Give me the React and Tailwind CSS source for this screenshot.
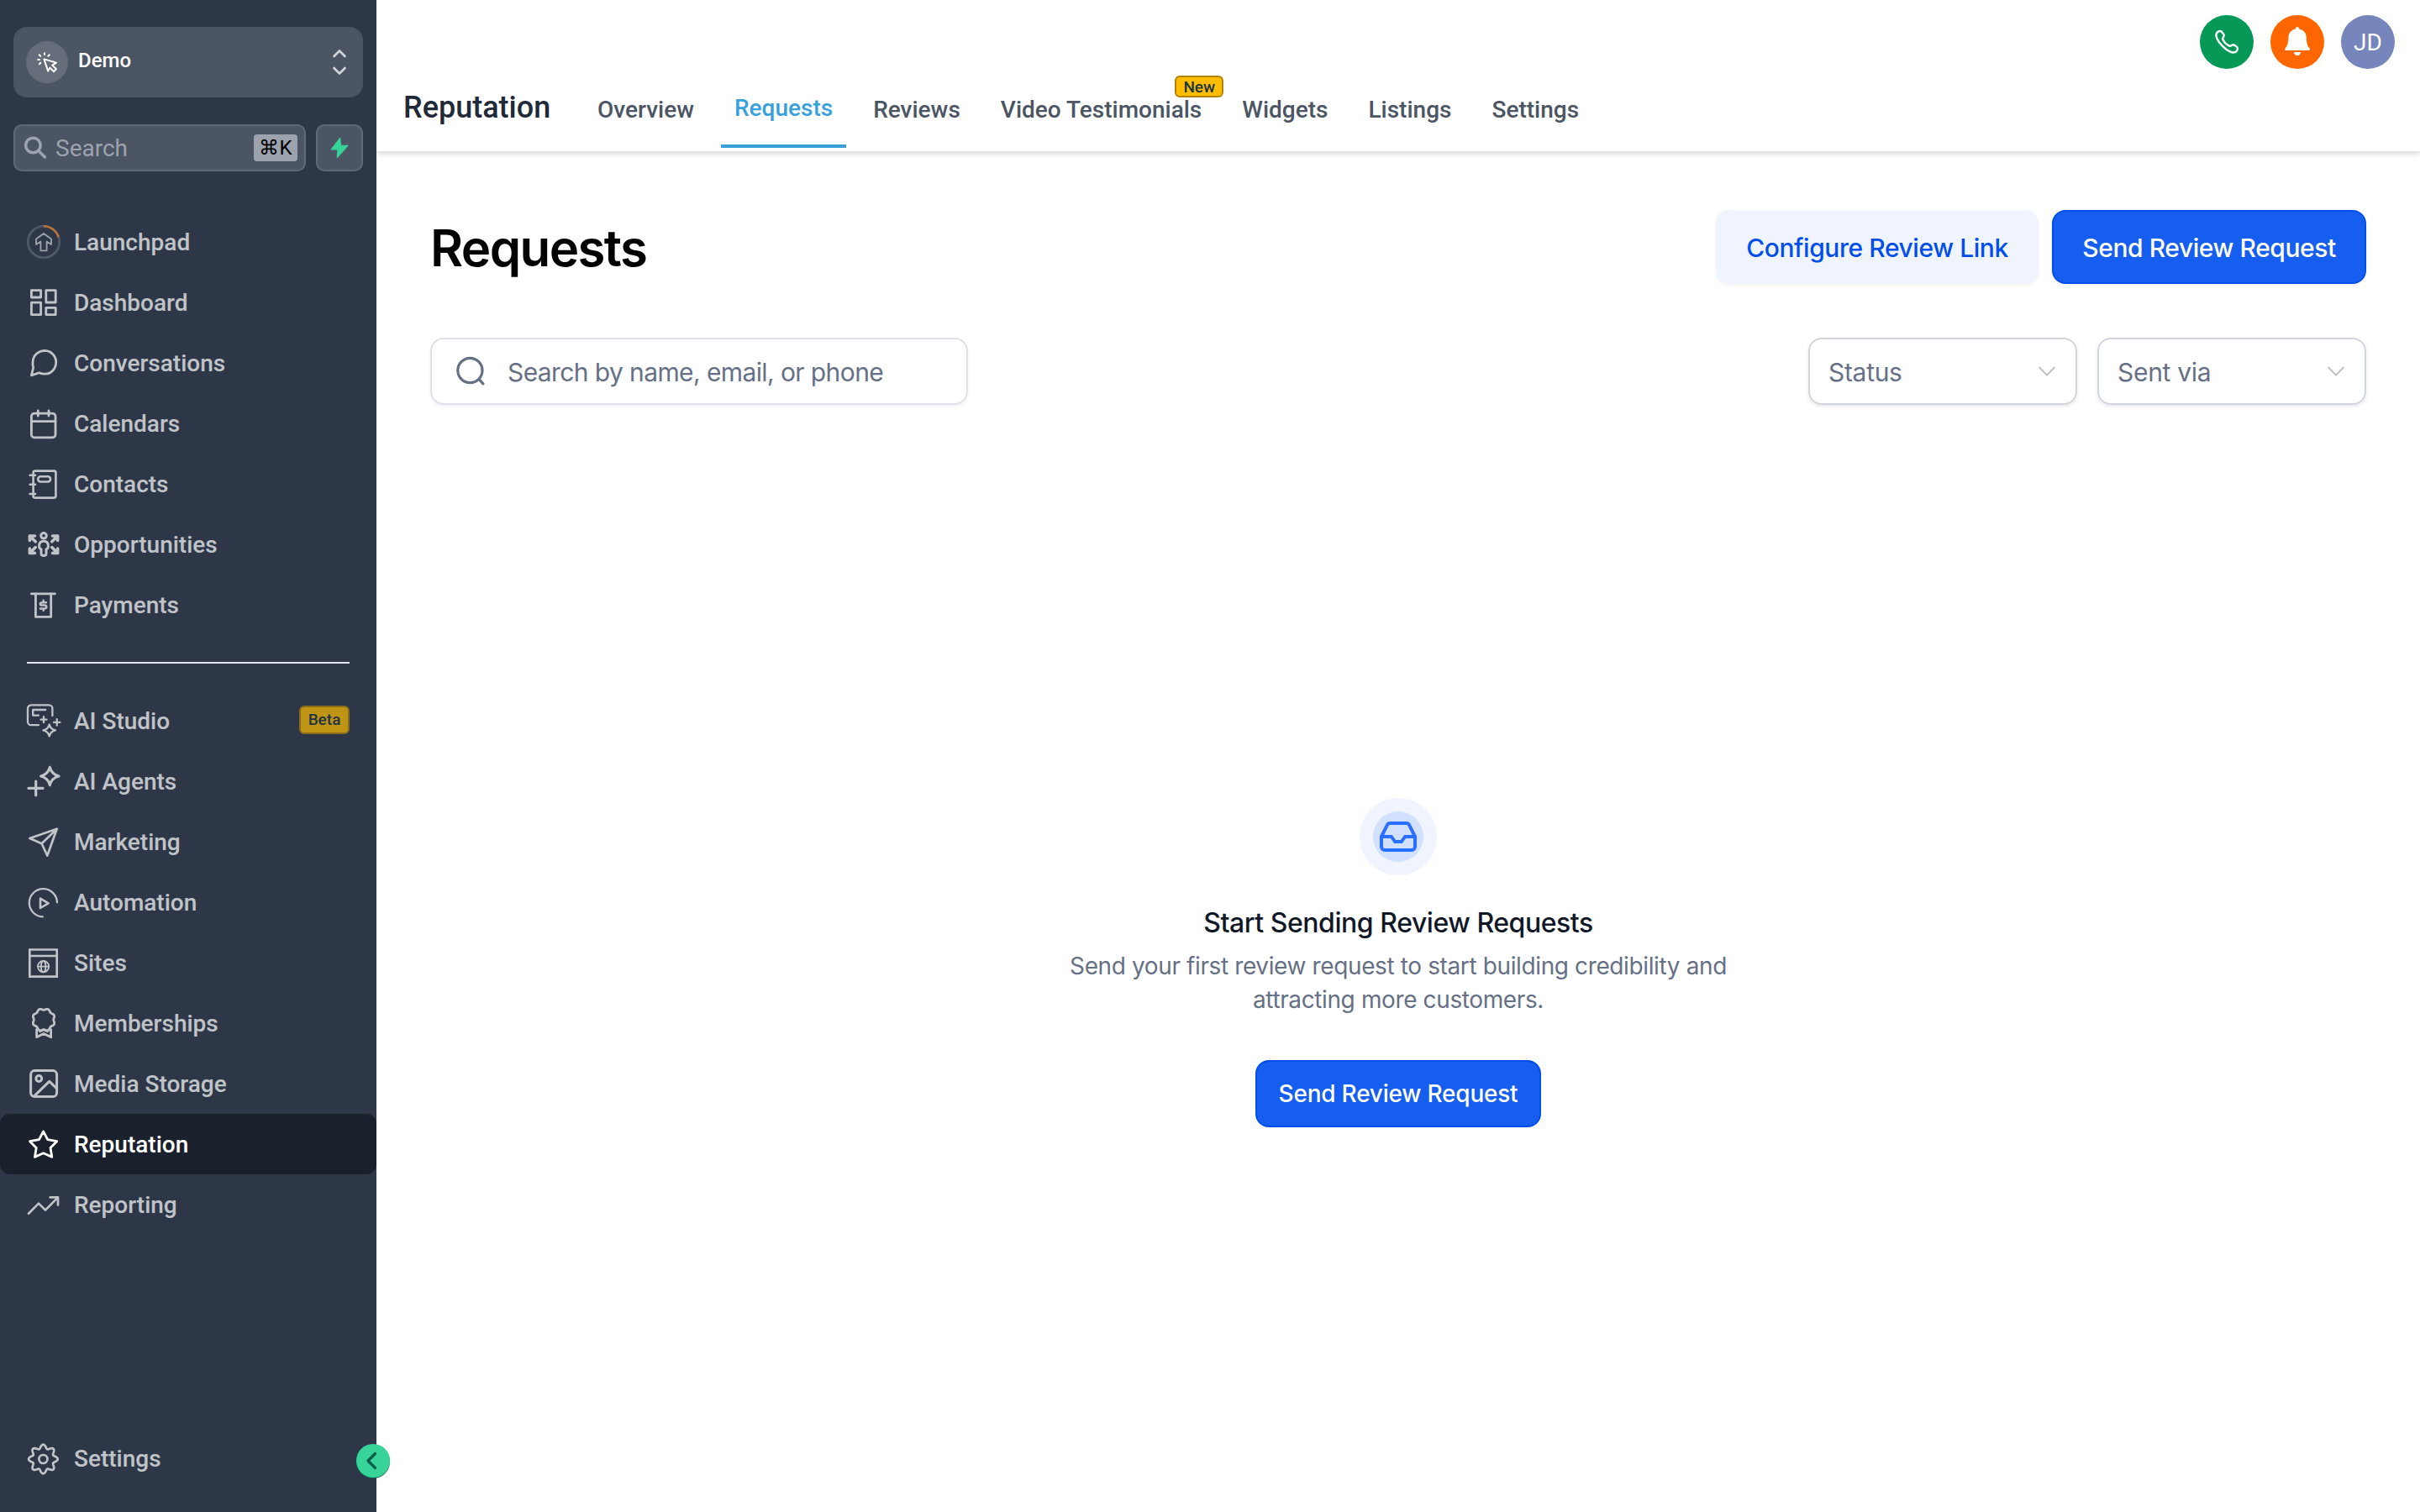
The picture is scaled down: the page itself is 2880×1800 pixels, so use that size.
import { Inbox } from "lucide-react"

// closed wavy outline, used by the badge and the gear
const wavyPath = (cx, cy, r, amp, lobes, phase) => {
    const pts = []
    for (let i = 0; i < 160; i++) {
        const a = (i / 160) * Math.PI * 2
        const rad = r + amp * Math.cos(lobes * a + phase)
        pts.push(`${(cx + rad * Math.sin(a)).toFixed(2)} ${(cy - rad * Math.cos(a)).toFixed(2)}`)
    }
    return `M${pts.join("L")}Z`
}

const Icon = ({ children, width = 2.8 }) => (
    <svg viewBox="0 0 40 40" className="w-10 h-10 shrink-0 overflow-visible" fill="none" stroke="currentColor" strokeWidth={width} strokeLinecap="round" strokeLinejoin="round">
        {children}
    </svg>
)

const icons = {
    launchpad: (
        <Icon width={1.9}>
            <circle cx="20" cy="20" r="18.7" strokeWidth="2.6" opacity="0.25" />
            <path d="M20 1.3A18.7 18.7 0 0 1 37.8 14.4" stroke="#f58a32" strokeWidth="2.6" strokeLinecap="butt" />
            <path opacity="0.75" d="M20 10L29 16.6V23L23.6 19.6V30.4H16.4V19.6L11 23V16.6Z" />
        </Icon>
    ),
    dashboard: (
        <Icon>
            <rect x="5.4" y="5.6" width="11.2" height="8.4" />
            <rect x="22.8" y="5.6" width="11.4" height="14.4" />
            <rect x="5.4" y="20.2" width="11.2" height="14.4" />
            <rect x="22.8" y="26.4" width="11.4" height="8.2" />
        </Icon>
    ),
    conversations: (
        <Icon width={1.7}>
            <g transform="translate(.5 .6) scale(1.63)">
                <path d="M21 11.5a8.38 8.38 0 0 1-.9 3.8 8.5 8.5 0 0 1-7.6 4.7 8.38 8.38 0 0 1-3.8-.9L3 21l1.4-5.7a8.38 8.38 0 0 1-.4-3.8 8.5 8.5 0 0 1 4.7-7.6 8.38 8.38 0 0 1 3.8-.9h.5a8.48 8.48 0 0 1 8 8v.5z" />
            </g>
        </Icon>
    ),
    calendars: (
        <Icon>
            <rect x="5.4" y="8.2" width="28.6" height="28.6" rx="3.4" />
            <path d="M13.3 5V11M26 5V11M5.4 17.7H34" />
        </Icon>
    ),
    contacts: (
        <Icon width={2.6}>
            <rect x="7.6" y="4.6" width="26.8" height="32" rx="2" />
            <rect x="13.2" y="11.3" width="14.8" height="6.2" rx="3" />
            <path d="M3.6 9.7H10M3.6 20.7H10M3.6 32H10" />
        </Icon>
    ),
    opportunities: (
        <Icon width={3}>
            <circle cx="20" cy="9.8" r="3.3" />
            <path d="M20 16.3C16.5 16.3 14.6 18.6 14.6 22C14.6 24 15.4 25.4 17 26V31C17 34.4 23 34.4 23 31V26C24.6 25.4 25.4 24 25.4 22C25.4 18.6 23.5 16.3 20 16.3Z" />
            <path strokeWidth="3.6" d="M10.2 16.8L3.4 10M9.4 10H3.4V15.4M29.8 16.8L36.6 10M30.6 10H36.6V15.4M10.2 23.6L3.4 30.4M9.4 30.4H3.4V25M29.8 23.6L36.6 30.4M30.6 30.4H36.6V25" />
        </Icon>
    ),
    payments: (
        <Icon>
            <path d="M5.4 6.9H33.4" />
            <path d="M10.4 6.9V34.4H28.7V6.9" />
            <path strokeWidth="2.5" d="M23 17.2H18.4C15 17.2 15 20.6 18.4 20.6H20.8C24.2 20.6 24.2 24.4 20.8 24.4H16M19.7 14.8V17M19.7 24.6V26.8" />
        </Icon>
    ),
    studio: (
        <Icon width={2.3}>
            <path d="M30.4 14V5.4A4 4 0 0 0 26.4 1.4H5A4 4 0 0 0 1 5.4V21.2A4 4 0 0 0 5 25.2H14" />
            <path d="M22.2 7H7.2V13.6H14M20 15.2V22.2M16.5 18.7H23.5M35.7 18.2V25.6M32 21.9H39.4" />
            <path d="M26.7 24.4Q28 30 34 31.3Q28 32.6 26.7 38.4Q25.4 32.6 19.4 31.3Q25.4 30 26.7 24.4Z" />
        </Icon>
    ),
    agents: (
        <Icon width={3.2}>
            <path d="M27.3 3.4Q29.4 11.8 38 14Q29.4 16.2 27.3 24.6Q25.2 16.2 16.6 14Q25.2 11.8 27.3 3.4Z" />
            <path d="M10.7 20V36.8M2 28.4H19" />
        </Icon>
    ),
    marketing: (
        <Icon width={2.7}>
            <path d="M35.7 4.7L3.4 16L17.6 22.3L24.3 36.6ZM35.7 4.7L17.6 22.3" />
        </Icon>
    ),
    automation: (
        <Icon width={2.3}>
            <path d="M36 20.3A16.6 16.6 0 1 0 18.8 37.4" />
            <path strokeWidth="2.6" d="M16 15.6L25.6 21.3L16 27Z" />
        </Icon>
    ),
    sites: (
        <Icon width={2.7}>
            <path strokeLinejoin="miter" d="M3.3 4.5H35.7V36.6H3.3ZM3.3 12H35.7" />
            <g strokeWidth="1.9">
                <circle cx="19.6" cy="24.6" r="6.6" />
                <ellipse cx="19.6" cy="24.6" rx="2.8" ry="6.6" />
                <path d="M13 24.6H26.2" />
            </g>
        </Icon>
    ),
    memberships: (
        <Icon width={2.8}>
            <path d={wavyPath(20, 16, 12.6, 0.9, 8, Math.PI)} />
            <path d="M11.6 27.6V36.8L20 32.6L28.6 36.8V27.6" />
            <path d="M15.4 29.8L20 28L24.6 29.8" />
        </Icon>
    ),
    media: (
        <Icon width={3}>
            <rect x="4.6" y="4.6" width="31" height="31" rx="4.6" />
            <circle cx="14.3" cy="14" r="3.4" />
            <path d="M9 34.6L26.7 17.4L35.4 25.6" />
        </Icon>
    ),
    reputation: (
        <Icon width={2.8}>
            <path d="M19.6 5L24.7 14.6L35.7 16.7L28 24.5L29.8 35.4L19.6 30.8L9.4 35.4L11.2 24.5L3.5 16.7L14.5 14.6Z" />
        </Icon>
    ),
    reporting: (
        <Icon width={2.7}>
            <path d="M2 30.8L14 18.6L22 26.6L37 11.4M27.6 11.4H37V20.6" />
        </Icon>
    ),
    settings: (
        <Icon width={2.7}>
            <path d={wavyPath(19.4, 21, 15, 2.3, 8, 0)} />
            <circle cx="19.4" cy="21" r="5" />
        </Icon>
    ),
}

const mainMenu = [
    { label: "Launchpad", icon: icons.launchpad },
    { label: "Dashboard", icon: icons.dashboard },
    { label: "Conversations", icon: icons.conversations },
    { label: "Calendars", icon: icons.calendars },
    { label: "Contacts", icon: icons.contacts },
    { label: "Opportunities", icon: icons.opportunities },
    { label: "Payments", icon: icons.payments },
]

const toolsMenu = [
    { label: "AI Studio", icon: icons.studio, badge: "Beta" },
    { label: "AI Agents", icon: icons.agents },
    { label: "Marketing", icon: icons.marketing },
    { label: "Automation", icon: icons.automation },
    { label: "Sites", icon: icons.sites },
    { label: "Memberships", icon: icons.memberships },
    { label: "Media Storage", icon: icons.media },
    { label: "Reputation", icon: icons.reputation, active: true },
    { label: "Reporting", icon: icons.reporting },
]

const tabs = [
    { label: "Overview" },
    { label: "Requests", active: true },
    { label: "Reviews" },
    { label: "Video Testimonials", badge: "New" },
    { label: "Widgets" },
    { label: "Listings" },
    { label: "Settings" },
]

const MenuItem = ({ item }) => (
    <a className={`flex items-center h-[72px] px-8 rounded-xl text-[28px] font-medium text-white ${item.active ? "bg-[#1a202c]" : ""}`}>
        <span className={`flex items-center w-full ${item.active ? "" : "opacity-70"}`}>
            {item.icon}
            <span className="ml-4 pt-0.5">{item.label}</span>
            {item.badge && (
                <span className="ml-auto -mt-0.5 flex items-center justify-center w-[60px] h-[34px] rounded-md border-2 border-[#b28307] bg-[#ffbc00] text-[19px] text-[#1a3440]">{item.badge}</span>
            )}
        </span>
    </a>
)

const Sidebar = () => (
    <aside className="relative flex flex-col w-[448px] shrink-0 bg-[#2d3748] font-['Roboto',sans-serif]">
        <div className="flex items-center h-[84px] mt-8 mx-4 pl-[15px] pr-5 rounded-2xl bg-[#4c5563]">
            <span className="w-[50px] h-[50px] rounded-full bg-[#666d7a]">
                <svg viewBox="0 0 50 50" fill="none" stroke="white" strokeWidth="2" strokeLinecap="round" strokeLinejoin="round">
                    <path d="M22 14.2V16M15.7 16.3L17.3 17.9M14.2 22H16M15.9 27.3L17.3 25.8M27.8 16.3L26.4 17.7" />
                    <path d="M21.4 21.4L36 25.6L31.2 28.6L36 33.2L33 36.2L28.5 31.6L26.2 35.6Z" />
                </svg>
            </span>
            <span className="ml-3 mb-1 text-[24px] font-medium text-white">Demo</span>
            <svg viewBox="0 0 16 30" className="w-4 h-[30px] ml-auto overflow-visible" fill="none" stroke="#d2d4d8" strokeWidth="2.6" strokeLinecap="round" strokeLinejoin="round">
                <path d="M1.5 8L8 1.5L14.5 8M1.5 22L8 28.5L14.5 22" />
            </svg>
        </div>

        <div className="flex gap-3 mt-8 mx-4">
            <div className="flex items-center w-[348px] h-14 pl-[9px] pr-2 rounded-[10px] border-2 border-[#606977] bg-[#4c5563] text-[28px] text-[#9ca3af]">
                <svg viewBox="0 0 30 30" className="w-[30px] h-[30px] overflow-visible" fill="none" stroke="currentColor" strokeWidth="3.5" strokeLinecap="round">
                    <circle cx="12.4" cy="12" r="8.8" />
                    <path d="M18.8 18.6L26.4 26" />
                </svg>
                <span className="ml-[9px] pt-0.5">Search</span>
                <span className="ml-auto flex items-center justify-center w-[52px] h-8 rounded bg-[#9ca3af] text-[24px] text-black">⌘K</span>
            </div>
            <div className="flex items-center justify-center w-14 h-14 rounded-[10px] border-2 border-[#606977] bg-[#4c5563]">
                <svg viewBox="0 0 24 26" className="w-6 h-[26px]" fill="#37d399" stroke="#37d399" strokeWidth="1.5" strokeLinejoin="round">
                    <path d="M12.6 1.6L2.6 14.8H10.2L9.4 24.2L21.6 10.4H13.4Z" />
                </svg>
            </div>
        </div>

        <nav className="mt-12">
            {mainMenu.map(item => <MenuItem key={item.label} item={item} />)}
        </nav>
        <div className="h-0.5 mx-8 my-8 bg-[#e2e8f0]" />
        <nav>
            {toolsMenu.map(item => <MenuItem key={item.label} item={item} />)}
        </nav>

        <div className="mt-auto mb-7">
            <MenuItem item={{ label: "Settings", icon: icons.settings }} />
        </div>
        <button className="absolute -right-4 bottom-[41px] flex items-center justify-center w-10 h-10 rounded-full bg-[#37d399] shadow-[0_1px_1px_#065f46]">
            <svg viewBox="0 0 12 20" className="w-3 h-5 mr-1 overflow-visible" fill="none" stroke="#065f46" strokeWidth="3.2" strokeLinecap="round" strokeLinejoin="round">
                <path d="M10.5 1.5L2 10L10.5 18.5" />
            </svg>
        </button>
    </aside>
)

const Header = () => (
    <header className="h-[180px] shrink-0 bg-white shadow-[0_2px_8px_rgba(0,0,0,0.2)] font-['Roboto',sans-serif]">
        <div className="flex justify-end gap-5 h-[82px] pt-[18px] pr-[30px]">
            <div className="w-16 h-16 rounded-full bg-[#059857]">
                <svg viewBox="0 0 64 64" fill="none" stroke="white" strokeWidth="2.4" strokeLinejoin="round">
                    <path d="M20.6 20.6C22.6 18.4 25.4 18.6 26.7 20.6L28.6 23.4C29.6 25.2 26.8 26.6 27.2 28.6C28.6 31.8 32 35.4 35.4 36.8C37.4 37.2 38.8 34.4 40.6 35.4L43.4 37.3C45.6 38.8 45.4 41.4 43.4 43.2C39.6 46.6 32.4 42.4 27 36.9C21.6 31.6 17.4 24.4 20.6 20.6Z" />
                </svg>
            </div>
            <div className="w-16 h-16 rounded-full bg-[#ff6600]">
                <svg viewBox="0 0 64 64" fill="white">
                    <path d="M32 14C33.4 14 34.2 15 34.2 16.4C39.6 17.6 42.6 21.4 42.8 26.6C43 33 43.8 36.4 46.6 39.6C47.6 40.8 47 42 45.6 42H18.6C17.2 42 16.6 40.8 17.6 39.6C20.4 36.4 21.2 33 21.4 26.6C21.6 21.4 24.6 17.6 29.8 16.4C29.8 15 30.6 14 32 14Z" />
                    <path d="M28 44H36C36 46.6 34.2 48.2 32 48.2C29.8 48.2 28 46.6 28 44Z" />
                </svg>
            </div>
            <div className="flex items-center justify-center w-16 h-16 pt-0.5 rounded-full bg-[#7685bb] text-[28px] text-white">JD</div>
        </div>
        <div className="flex items-end h-[94px] pl-8">
            <h2 className="w-[215px] h-[70px] text-[36px] leading-[44px] font-medium text-[#1f2937]">Reputation</h2>
            <div className="flex gap-4">
                {tabs.map(tab => (
                    <a key={tab.label} className={`relative h-[70px] px-4 text-[28px] leading-[46px] font-medium whitespace-nowrap ${tab.active ? "border-b-4 border-[#38a0db] text-[#38a0db]" : "pt-0.5 text-[#4b5563]"}`}>
                        {tab.label}
                        {tab.badge && (
                            <span className="absolute -right-[10px] -top-[16px] flex items-center justify-center w-[58px] h-[26px] pt-px rounded-md border-2 border-[#b28307] bg-[#ffbc00] text-[19px] text-[#1a3440]">{tab.badge}</span>
                        )}
                    </a>
                ))}
            </div>
        </div>
    </header>
)

const Select = ({ label }) => (
    <div className="flex items-center justify-between w-80 h-20 px-[22px] rounded-2xl border-2 border-[#d0d5dd] shadow-[0_2px_4px_rgba(16,24,40,0.1)] text-[#667085] text-[30px]">
        <span className="pt-0.5 tracking-[-0.3px]">{label}</span>
        <svg viewBox="0 0 20 12" className="w-5 h-3 mr-0.5 overflow-visible" fill="none" stroke="#c2c2c2" strokeWidth="2">
            <path d="M0.5 1L10 10.5L19.5 1" />
        </svg>
    </div>
)

const EmptyState = () => (
    <div className="flex flex-col items-center">
        <div className="flex items-center justify-center w-[92px] h-[92px] rounded-full bg-[#eff4ff]">
            <div className="flex items-center justify-center w-[60px] h-[60px] rounded-full bg-[#d1e0ff]">
                <Inbox size={48} strokeWidth={2} className="text-[#2970ff] shrink-0" />
            </div>
        </div>
        <h3 className="mt-[33px] text-[32px] leading-[48px] font-medium tracking-[-0.45px] text-[#101828]">Start Sending Review Requests</h3>
        <p className="mt-[7px] w-[800px] text-center text-[28px] leading-[40px] tracking-[-0.38px] text-[#667085]">
            Send your first review request to start building credibility and attracting more customers.
        </p>
        <button className="mt-[52px] w-[340px] h-20 rounded-2xl border-2 border-[#004eeb] bg-[#155eef] text-[28px] font-medium tracking-[-0.22px] text-white">Send Review Request</button>
    </div>
)

const App = () => {
    return (
        <div className="flex w-[2880px] h-[1800px] overflow-hidden bg-white">
            <Sidebar />
            <div className="flex flex-col flex-1">
                <Header />
                <main className="px-16 pt-[70px] font-['Inter',sans-serif]">
                    <div className="flex items-center justify-between">
                        <h1 className="pt-0.5 text-[60px] leading-[76px] font-semibold tracking-[-1.6px] text-black">Requests</h1>
                        <div className="flex gap-4 text-[30px] font-medium tracking-[-0.43px]">
                            <button className="w-96 h-[88px] pt-0.5 rounded-2xl bg-[#eff4ff] text-[#004eeb] shadow-[0_2px_4px_rgba(16,24,40,0.05)]">Configure Review Link</button>
                            <button className="w-[374px] h-[88px] pt-0.5 rounded-2xl border-2 border-[#004eeb] bg-[#155eef] text-white shadow-[0_2px_4px_rgba(16,24,40,0.05)]">Send Review Request</button>
                        </div>
                    </div>
                    <div className="flex justify-between mt-16">
                        <div className="flex items-center w-[640px] h-20 px-7 rounded-2xl border-2 border-[#e0e0e8] shadow-[0_2px_4px_rgba(16,24,40,0.05)] text-[30px] text-[#667085]">
                            <svg viewBox="0 0 36 36" className="w-9 h-9" fill="none" stroke="currentColor" strokeWidth="3.2" strokeLinecap="round">
                                <circle cx="17.4" cy="17" r="14.6" />
                                <path d="M28 27.4L33 32.8" />
                            </svg>
                            <span className="ml-[26px] pt-0.5 tracking-[-0.6px]">Search by name, email, or phone</span>
                        </div>
                        <div className="flex gap-6">
                            <Select label="Status" />
                            <Select label="Sent via" />
                        </div>
                    </div>
                    <div className="mt-[468px]">
                        <EmptyState />
                    </div>
                </main>
            </div>
        </div>
    )
}

export default App
